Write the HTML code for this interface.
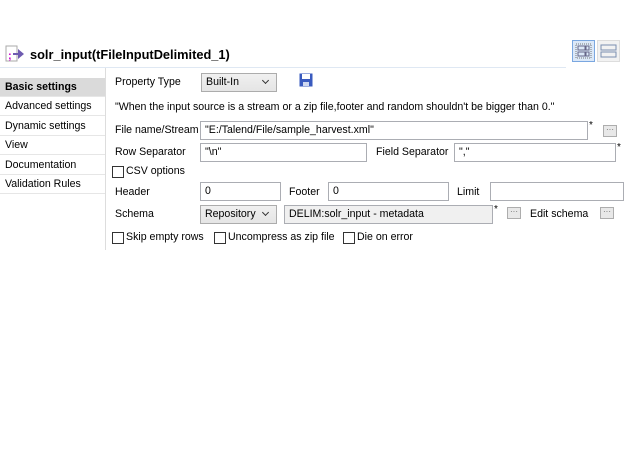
<!DOCTYPE html>
<html><head><meta charset="utf-8"><style>
*{margin:0;padding:0;box-sizing:border-box}
body{width:624px;height:451px;background:#fff;font-family:"Liberation Sans",Arial,sans-serif;font-size:10.6px;color:#000;position:relative;overflow:hidden}
.a{position:absolute;white-space:nowrap}
.inp{position:absolute;border:1px solid #abadb3;background:#fff;height:19px;padding:2px 4px;line-height:13px;white-space:nowrap;overflow:hidden}
.dd{position:absolute;border:1px solid #acacac;background:linear-gradient(#f0f0f0,#e5e5e5);height:19px;padding:2px 4px;line-height:13px;white-space:nowrap}
.dd:after{content:"";position:absolute;right:8px;top:4px;width:4px;height:4px;border-right:1.3px solid #333;border-bottom:1.3px solid #333;transform:rotate(45deg)}
.btn{position:absolute;width:14px;height:12px;border:1px solid #adadad;background:#e8e8e8;font-size:8px;line-height:8px;text-align:center;color:#666}
.cb{position:absolute;width:12px;height:12px;border:1px solid #333;background:#fff}
.nav{position:absolute;left:0;width:105px;height:19px;padding:3px 5px;border-bottom:1px solid #e6e6e6;white-space:nowrap}
</style></head><body>
<svg class="a" style="left:5px;top:45px" width="22" height="18"><rect x="1" y="1" width="11" height="15" fill="#fff" stroke="#aaa"/><text x="3" y="14" font-size="11" fill="#c0c" font-weight="bold">;</text><path d="M8 8h5V4l6 5-6 5v-4H8z" fill="#6e5bb0"/></svg>
<div class="a" style="left:30px;top:47px;font-size:12.8px;font-weight:bold">solr_input(tFileInputDelimited_1)</div>
<div class="a" style="left:0;top:67px;width:566px;height:1px;background:#dfe8f3"></div>
<div class="a" style="left:572px;top:40px;width:23px;height:22px;border:1px solid #7aa7e0;background:#dbe8f8"><svg width="21" height="20"><rect x="3" y="3" width="15" height="14" fill="none" stroke="#777" stroke-dasharray="1 1"/><rect x="5" y="5" width="7" height="4" fill="none" stroke="#668"/><rect x="13" y="5" width="3" height="4" fill="none" stroke="#668"/><rect x="5" y="11" width="7" height="4" fill="none" stroke="#668"/><rect x="13" y="11" width="3" height="4" fill="none" stroke="#668"/></svg></div>
<div class="a" style="left:597px;top:40px;width:23px;height:22px;border:1px solid #ddd;background:#f2f2f2"><svg width="21" height="20"><rect x="3" y="4" width="15" height="5" fill="none" stroke="#7a8fb0"/><rect x="3" y="11" width="15" height="5" fill="none" stroke="#7a8fb0"/></svg></div>
<div class="a" style="left:105px;top:68px;width:1px;height:182px;background:#ddd"></div>
<div class="nav" style="top:78px;background:#dadada;font-weight:bold">Basic settings</div>
<div class="nav" style="top:97px">Advanced settings</div>
<div class="nav" style="top:117px">Dynamic settings</div>
<div class="nav" style="top:136px">View</div>
<div class="nav" style="top:156px">Documentation</div>
<div class="nav" style="top:175px">Validation Rules</div>
<div class="a" style="left:115px;top:76px">Property Type</div>
<div class="dd" style="left:201px;top:73px;width:76px">Built-In</div>
<svg class="a" style="left:299px;top:73px" width="15" height="15"><rect x="0.5" y="0.5" width="13" height="13" fill="#3a5bbf"/><rect x="3" y="1" width="8" height="5" fill="#fff"/><rect x="4" y="9" width="6" height="4" fill="#cfd8f0"/></svg>
<div class="a" style="left:115px;top:101px">"When the input source is a stream or a zip file,footer and random shouldn't be bigger than 0."</div>
<div class="a" style="left:115px;top:124px">File name/Stream</div>
<div class="inp" style="left:200px;top:121px;width:388px">"E:/Talend/File/sample_harvest.xml"</div>
<div class="a" style="left:589px;top:120px;font-size:10px">*</div>
<div class="btn" style="left:603px;top:125px">···</div>
<div class="a" style="left:115px;top:146px">Row Separator</div>
<div class="inp" style="left:200px;top:143px;width:167px">"\n"</div>
<div class="a" style="left:376px;top:146px">Field Separator</div>
<div class="inp" style="left:454px;top:143px;width:162px">","</div>
<div class="a" style="left:617px;top:142px;font-size:10px">*</div>
<div class="cb" style="left:112px;top:166px"></div>
<div class="a" style="left:126px;top:165px">CSV options</div>
<div class="a" style="left:115px;top:186px">Header</div>
<div class="inp" style="left:200px;top:182px;width:81px">0</div>
<div class="a" style="left:289px;top:186px">Footer</div>
<div class="inp" style="left:328px;top:182px;width:121px">0</div>
<div class="a" style="left:457px;top:186px">Limit</div>
<div class="inp" style="left:490px;top:182px;width:134px"></div>
<div class="a" style="left:115px;top:208px">Schema</div>
<div class="dd" style="left:200px;top:205px;width:77px">Repository</div>
<div class="inp" style="left:284px;top:205px;width:209px;background:#f0f0f0">DELIM:solr_input - metadata</div>
<div class="a" style="left:494px;top:204px;font-size:10px">*</div>
<div class="btn" style="left:507px;top:207px">···</div>
<div class="a" style="left:530px;top:208px">Edit schema</div>
<div class="btn" style="left:600px;top:207px">···</div>
<div class="cb" style="left:112px;top:232px"></div>
<div class="a" style="left:126px;top:231px">Skip empty rows</div>
<div class="cb" style="left:214px;top:232px"></div>
<div class="a" style="left:228px;top:231px">Uncompress as zip file</div>
<div class="cb" style="left:343px;top:232px"></div>
<div class="a" style="left:357px;top:231px">Die on error</div>
</body></html>
